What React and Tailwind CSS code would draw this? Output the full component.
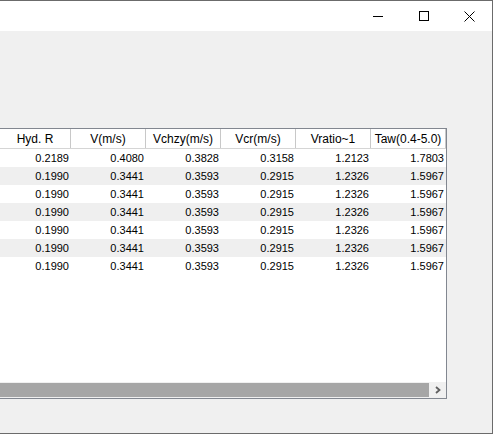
const columns = [
  { label: "Hyd. R", width: "w-[71px]" },
  { label: "V(m/s)", width: "w-[75px]" },
  { label: "Vchzy(m/s)", width: "w-[75px]" },
  { label: "Vcr(m/s)", width: "w-[75px]" },
  { label: "Vratio~1", width: "w-[75px]" },
  { label: "Taw(0.4-5.0)", width: "w-[75px]" },
];

const rows = [
  ["0.2189", "0.4080", "0.3828", "0.3158", "1.2123", "1.7803"],
  ["0.1990", "0.3441", "0.3593", "0.2915", "1.2326", "1.5967"],
  ["0.1990", "0.3441", "0.3593", "0.2915", "1.2326", "1.5967"],
  ["0.1990", "0.3441", "0.3593", "0.2915", "1.2326", "1.5967"],
  ["0.1990", "0.3441", "0.3593", "0.2915", "1.2326", "1.5967"],
  ["0.1990", "0.3441", "0.3593", "0.2915", "1.2326", "1.5967"],
  ["0.1990", "0.3441", "0.3593", "0.2915", "1.2326", "1.5967"],
];

function TitleBar() {
  return (
    <div className="flex h-[30px] items-center justify-end bg-white">
      <div className="flex h-full w-[46px] items-center justify-center">
        <div className="h-px w-[10px] bg-black" />
      </div>
      <div className="flex h-full w-[45px] items-center justify-center">
        <div className="h-[10px] w-[10px] border border-black" />
      </div>
      <div className="flex h-full w-[46px] items-center justify-center">
        <svg width="11" height="11" viewBox="0 0 11 11">
          <path d="M0.5 0.5 L10.5 10.5 M10.5 0.5 L0.5 10.5" stroke="#000" strokeWidth="1" />
        </svg>
      </div>
    </div>
  );
}

function Grid() {
  return (
    <div className="flex h-[271px] w-[447px] flex-col border-t border-r border-b border-[#828790] bg-white">
      {/* header */}
      <div className="flex h-[20px] border-b border-[#d5d5d5] font-['Liberation_Sans',sans-serif] text-[12px]">
        {columns.map((c) => (
          <div
            key={c.label}
            className={`${c.width} flex items-center justify-center border-r border-[#c8c8c8] text-black`}
          >
            {c.label}
          </div>
        ))}
      </div>

      {/* body */}
      <div className="flex flex-1 flex-col font-['Liberation_Sans',sans-serif] text-[11px] text-black">
        {rows.map((r, i) => (
          <div
            key={i}
            className={`flex h-[18px] ${i % 2 === 1 ? "bg-[#efefef]" : "bg-white"}`}
          >
            {r.map((v, j) => (
              <div
                key={j}
                className={`${columns[j].width} flex items-center justify-end pr-[2px]`}
              >
                {v}
              </div>
            ))}
          </div>
        ))}
      </div>

      {/* horizontal scrollbar */}
      <div className="flex h-[16px] bg-[#f0f0f0]">
        <div className="my-px w-[429px] bg-[#a6a6a6]" />
        <div className="flex flex-1 items-center justify-center">
          <svg width="8" height="8" viewBox="0 0 8 8">
            <path d="M2 1 L5.5 4 L2 7" stroke="#606060" strokeWidth="1.8" fill="none" />
          </svg>
        </div>
      </div>
    </div>
  );
}

export default function App() {
  return (
    <div className="flex h-[434px] w-[493px] flex-col overflow-hidden border-t border-r border-b border-[#6b6b6b] bg-[#f0f0f0]">
      <TitleBar />
      <div className="flex-1 pt-[97px]">
        <Grid />
      </div>
    </div>
  );
}
